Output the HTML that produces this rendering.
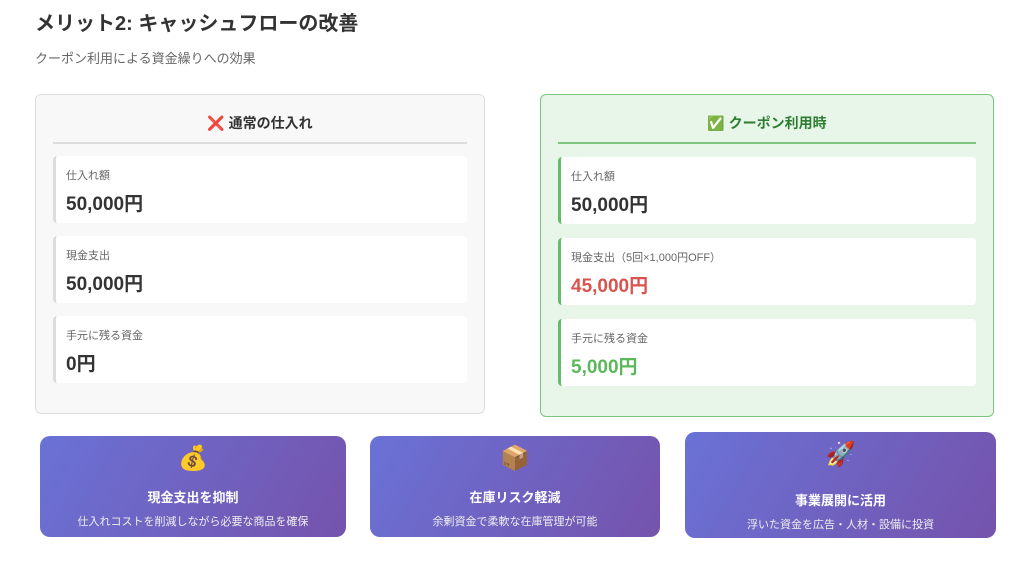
<!DOCTYPE html>
<html><head><meta charset="utf-8"><style>
*{margin:0;padding:0;box-sizing:border-box}
body{width:1024px;height:561px;background:#fff;font-family:"Liberation Sans","Noto Sans CJK JP",sans-serif;color:#333;position:relative;overflow:hidden}
.abs{position:absolute}
h1{position:absolute;left:35px;top:7px;font-size:20px;font-weight:bold;color:#333}
.sub{position:absolute;left:35px;top:48px;font-size:13px;color:#666}
.box{position:absolute;border-radius:6px}
.b1{left:35px;top:94px;width:450px;height:320px;background:#f8f8f8;border:1.5px solid #ddd}
.b2{left:540px;top:94px;width:454px;height:323px;background:#e8f5e9;border:1.5px solid #7ec47f}
.hd{position:absolute;top:18px;left:0;right:0;text-align:center;font-size:14px;font-weight:bold}
.ln{position:absolute;top:47px;left:17px;right:17px;height:2px}
.it{position:absolute;left:17px;right:17px;height:67px;background:#fff;border-radius:4px;border-left:3px solid #ddd}
.it .l{position:absolute;left:10px;top:11px;font-size:11px;color:#666}
.it .v{position:absolute;left:10px;top:33px;font-size:19px;font-weight:bold;color:#333}
.b2 .it{border-left-color:#66bb6a}
.card{position:absolute;border-radius:10px;background:linear-gradient(120deg,#6a72d6,#7553ac);color:#fff;text-align:center}
.card .e{position:absolute;left:0;right:0;top:8px;font-size:24px}
.card .t{position:absolute;left:0;right:0;font-size:13px;font-weight:bold}
.card .s{position:absolute;left:0;right:0;font-size:11px;color:#eee}
</style></head><body>
<h1>メリット2: キャッシュフローの改善</h1>
<div class="sub">クーポン利用による資金繰りへの効果</div>
<div class="box b1">
<div class="hd"><span style="color:#d93025">❌</span> 通常の仕入れ</div>
<div class="ln" style="background:#ddd"></div>
<div class="it" style="top:61px"><div class="l">仕入れ額</div><div class="v">50,000円</div></div>
<div class="it" style="top:141px"><div class="l">現金支出</div><div class="v">50,000円</div></div>
<div class="it" style="top:221px"><div class="l">手元に残る資金</div><div class="v">0円</div></div>
</div>
<div class="box b2">
<div class="hd" style="color:#2e7d32"><span style="color:#4caf50">✅</span> クーポン利用時</div>
<div class="ln" style="background:#7ec47f"></div>
<div class="it" style="top:62px"><div class="l">仕入れ額</div><div class="v">50,000円</div></div>
<div class="it" style="top:143px"><div class="l">現金支出（5回×1,000円OFF）</div><div class="v" style="color:#d9534f">45,000円</div></div>
<div class="it" style="top:224px"><div class="l">手元に残る資金</div><div class="v" style="color:#5cb85c">5,000円</div></div>
</div>
<div class="card" style="left:40px;top:436px;width:306px;height:101px"><div class="e">💰</div><div class="t" style="top:51px">現金支出を抑制</div><div class="s" style="top:77px">仕入れコストを削減しながら必要な商品を確保</div></div>
<div class="card" style="left:370px;top:436px;width:290px;height:101px"><div class="e">📦</div><div class="t" style="top:51px">在庫リスク軽減</div><div class="s" style="top:77px">余剰資金で柔軟な在庫管理が可能</div></div>
<div class="card" style="left:685px;top:432px;width:311px;height:106px"><div class="e">🚀</div><div class="t" style="top:58px">事業展開に活用</div><div class="s" style="top:84px">浮いた資金を広告・人材・設備に投資</div></div>
</body></html>
